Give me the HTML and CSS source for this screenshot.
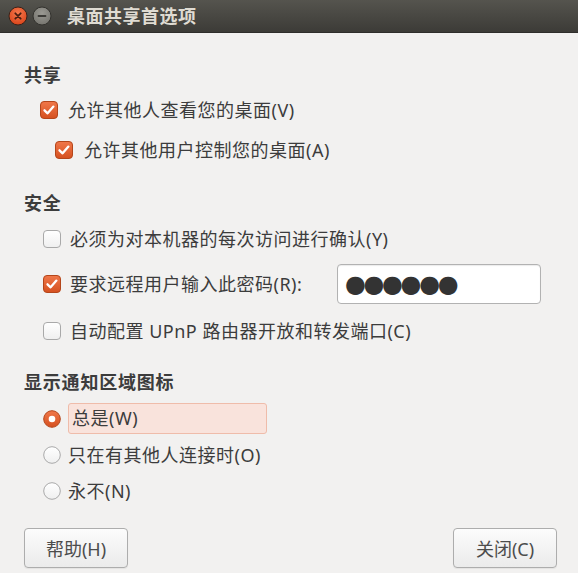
FILE: index.html
```html
<!DOCTYPE html>
<html lang="zh-CN">
<head>
<meta charset="utf-8">
<title>桌面共享首选项</title>
<link rel="stylesheet" href="styles.css">
</head>
<body>
<div class="window">
  <div class="titlebar">
    <div class="controls">
      <svg class="wbtn" width="20" height="20" viewBox="0 0 20 20">
        <defs>
          <radialGradient id="gc" cx="50%" cy="35%" r="65%">
            <stop offset="0" stop-color="#f57a4e"/>
            <stop offset="1" stop-color="#d9441a"/>
          </radialGradient>
        </defs>
        <circle cx="10" cy="10" r="9" fill="url(#gc)" stroke="#3a2219" stroke-width="1"/>
        <path d="M7.3 7.3 L12.7 12.7 M12.7 7.3 L7.3 12.7" stroke="#4a1e10" stroke-width="1.8" stroke-linecap="round"/>
      </svg>
      <svg class="wbtn" width="20" height="20" viewBox="0 0 20 20">
        <defs>
          <radialGradient id="gm" cx="50%" cy="35%" r="65%">
            <stop offset="0" stop-color="#9a9993"/>
            <stop offset="1" stop-color="#76756f"/>
          </radialGradient>
        </defs>
        <circle cx="10" cy="10" r="9" fill="url(#gm)" stroke="#33322e" stroke-width="1"/>
        <path d="M6.5 10 L13.5 10" stroke="#3c3b37" stroke-width="1.8" stroke-linecap="round"/>
      </svg>
    </div>
    <div class="title">桌面共享首选项</div>
  </div>

  <div class="content">
    <div class="sec-title st-share">共享</div>
    <div class="row r-share1">
      <svg class="cb" width="18" height="18" viewBox="0 0 18 18"><defs><linearGradient id="go" x1="0" y1="0" x2="0" y2="1"><stop offset="0" stop-color="#f0784a"/><stop offset="1" stop-color="#d5501f"/></linearGradient></defs><rect x="0.5" y="0.5" width="17" height="17" rx="3.5" fill="url(#go)" stroke="#b4461b"/><path d="M4.5 9.3 L7.6 12.3 L13.4 5.6" fill="none" stroke="#fff" stroke-width="2.3" stroke-linecap="round" stroke-linejoin="round"/></svg>
      <span class="label">允许其他人查看您的桌面(V)</span>
    </div>
    <div class="row r-share2">
      <svg class="cb" width="18" height="18" viewBox="0 0 18 18"><rect x="0.5" y="0.5" width="17" height="17" rx="3.5" fill="url(#go)" stroke="#b4461b"/><path d="M4.5 9.3 L7.6 12.3 L13.4 5.6" fill="none" stroke="#fff" stroke-width="2.3" stroke-linecap="round" stroke-linejoin="round"/></svg>
      <span class="label">允许其他用户控制您的桌面(A)</span>
    </div>

    <div class="sec-title st-sec">安全</div>
    <div class="row r-sec1">
      <svg class="cb" width="18" height="18" viewBox="0 0 18 18"><defs><linearGradient id="gw" x1="0" y1="0" x2="0" y2="1"><stop offset="0" stop-color="#ffffff"/><stop offset="1" stop-color="#efefef"/></linearGradient></defs><rect x="0.5" y="0.5" width="17" height="17" rx="3.5" fill="url(#gw)" stroke="#a9a9a9"/></svg>
      <span class="label">必须为对本机器的每次访问进行确认(Y)</span>
    </div>
    <div class="row r-sec2">
      <svg class="cb" width="18" height="18" viewBox="0 0 18 18"><rect x="0.5" y="0.5" width="17" height="17" rx="3.5" fill="url(#go)" stroke="#b4461b"/><path d="M4.5 9.3 L7.6 12.3 L13.4 5.6" fill="none" stroke="#fff" stroke-width="2.3" stroke-linecap="round" stroke-linejoin="round"/></svg>
      <span class="label">要求远程用户输入此密码(R):</span>
      <div class="entry"><span class="dots">●●●●●●</span></div>
    </div>
    <div class="row r-sec3">
      <svg class="cb" width="18" height="18" viewBox="0 0 18 18"><rect x="0.5" y="0.5" width="17" height="17" rx="3.5" fill="url(#gw)" stroke="#a9a9a9"/></svg>
      <span class="label">自动配置 UPnP 路由器开放和转发端口(C)</span>
    </div>

    <div class="sec-title st-notify">显示通知区域图标</div>
    <div class="row r-rad1">
      <svg class="rb" width="18" height="18" viewBox="0 0 18 18"><circle cx="9" cy="9" r="8.3" fill="url(#go)" stroke="#b4461b"/><circle cx="9" cy="9" r="3.3" fill="#fff"/></svg>
      <span class="label focus">总是(W)</span>
    </div>
    <div class="row r-rad2">
      <svg class="rb" width="18" height="18" viewBox="0 0 18 18"><circle cx="9" cy="9" r="8.3" fill="url(#gw)" stroke="#a9a9a9"/></svg>
      <span class="label">只在有其他人连接时(O)</span>
    </div>
    <div class="row r-rad3">
      <svg class="rb" width="18" height="18" viewBox="0 0 18 18"><circle cx="9" cy="9" r="8.3" fill="url(#gw)" stroke="#a9a9a9"/></svg>
      <span class="label">永不(N)</span>
    </div>

    <div class="buttons">
      <button class="btn">帮助(H)</button>
      <button class="btn">关闭(C)</button>
    </div>
  </div>
</div>
</body>
</html>
```

FILE: styles.css
```css
* { box-sizing: border-box; }
html, body {
  margin: 0;
  padding: 0;
  width: 578px;
  height: 573px;
  overflow: hidden;
  background: #f2f1f0;
}
.window {
  width: 578px;
  height: 573px;
  font-family: "Noto Sans", "Noto Sans CJK SC", sans-serif;
  font-size: 18px;
  color: #3c3c3c;
}
.titlebar {
  height: 33px;
  background: linear-gradient(#55544e, #3c3b37);
  border-bottom: 1px solid #2f2e2b;
  display: flex;
  align-items: center;
  padding-left: 8px;
}
.controls {
  display: flex;
  gap: 4px;
  align-items: center;
}
.wbtn { display: block; }
.title {
  margin-left: 15px;
  color: #dfdbd2;
  font-weight: bold;
  font-size: 18px;
  line-height: 24px;
  letter-spacing: 0.5px;
}
.content {
  padding: 0 21px 0 24px;
  display: flex;
  flex-direction: column;
}
.sec-title {
  font-weight: bold;
  height: 24px;
  line-height: 24px;
  letter-spacing: 0.8px;
}
.st-share { margin-top: 30px; }
.st-sec { margin-top: 26px; }
.st-notify { margin-top: 24px; }

.row {
  display: flex;
  align-items: center;
  height: 30px;
  line-height: 24px;
}
.cb, .rb { flex: none; display: block; }
.label { margin-left: 10px; letter-spacing: 0.5px; }

.r-share1 { margin-top: 8px; padding-left: 16px; }
.r-share2 { margin-top: 10px; padding-left: 31px; }
.r-share2 .label { margin-left: 11px; }
.r-sec1 { margin-top: 9px; padding-left: 19px; }
.r-sec2 { margin-top: 10px; padding-left: 19px; height: 40px; }
.r-sec3 { margin-top: 12px; padding-left: 19px; }
.r-sec1 .label, .r-sec2 .label, .r-sec3 .label { margin-left: 9px; }

.entry {
  margin-left: auto;
  margin-right: 16px;
  width: 204px;
  height: 40px;
  background: #ffffff;
  border: 1px solid #b2b2b2;
  border-radius: 4px;
  box-shadow: inset 0 1px 1px rgba(0,0,0,0.08);
  display: flex;
  align-items: center;
  padding-left: 7px;
}
.dots {
  font-family: "DejaVu Sans", sans-serif;
  font-size: 24px;
  line-height: 24px;
  letter-spacing: -2.4px;
  color: #333333;
}

.r-rad1 { margin-top: 9px; padding-left: 19px; height: 31px; }
.r-rad2 { margin-top: 6px; padding-left: 19px; }
.r-rad3 { margin-top: 6px; padding-left: 19px; }
.rb + .label { margin-left: 7px; }
.focus {
  width: 199px;
  height: 31px;
  padding-left: 3px;
  line-height: 29px;
  background: #f9e3dc;
  border: 1px solid #efbcaa;
  border-radius: 3px;
}

.buttons {
  margin-top: 22px;
  display: flex;
  justify-content: space-between;
}
.btn {
  width: 104px;
  height: 40px;
  font-family: "Noto Sans", "Noto Sans CJK SC", sans-serif;
  font-size: 18px;
  color: #4c4c4c;
  background: linear-gradient(#fcfcfc, #ebebeb);
  border: 1px solid #adadad;
  border-radius: 4px;
  box-shadow: 0 1px 1px rgba(0,0,0,0.06);
  padding: 0;
}
```
